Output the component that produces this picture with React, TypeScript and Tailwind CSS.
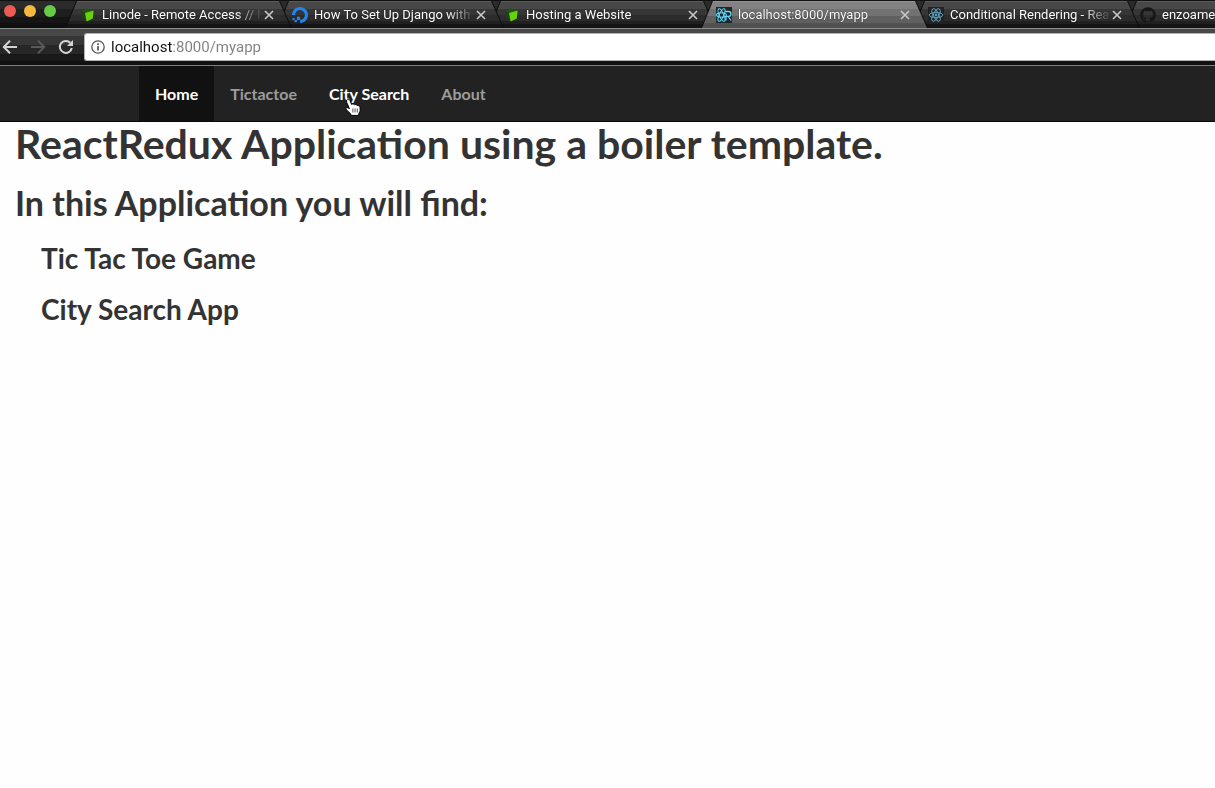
import React from "react";
import { FaGithub } from "react-icons/fa";
import { SiDigitalocean } from "react-icons/si";

function LinodeIcon() {
  return (
    <svg viewBox="0 0 16 16" className="h-4 w-4">
      <path d="M0.5 3.5 L7 1.5 L13 3 L6 6.5 Z" fill="#24501a" />
      <path d="M0.5 3.5 L6 6.5 L6.6 14.5 L2 10.5 Z" fill="#233d1d" />
      <path d="M5 6 L13.6 3.4 L12.8 11.5 L6.6 14.6 Z" fill="#66d30a" />
    </svg>
  );
}

function ReduxReactIcon() {
  return (
    <svg viewBox="0 0 16 16" className="h-4 w-4 bg-[#20262a]" fill="none" stroke="#62d4f3">
      <ellipse cx="5.5" cy="8" rx="5" ry="2.2" strokeWidth="1.1" />
      <ellipse cx="5.5" cy="8" rx="6.8" ry="2.2" strokeWidth="1.1" transform="rotate(66 5.5 8)" />
      <ellipse cx="5.5" cy="8" rx="6.8" ry="2.2" strokeWidth="1.1" transform="rotate(114 5.5 8)" />
      <path d="M9 4.5 H12.6 A2.4 2.4 0 0 1 12.6 9.3 H9.5 M10 9.3 V13.5 M12.2 9.5 L15 13.5" strokeWidth="1.3" />
    </svg>
  );
}

function ReactIcon() {
  return (
    <svg viewBox="0 0 16 16" className="h-4 w-4 bg-[#222222]" fill="none" stroke="#5a9fbd">
      <ellipse cx="8" cy="8" rx="6.8" ry="2.7" />
      <ellipse cx="8" cy="8" rx="6.8" ry="2.7" transform="rotate(60 8 8)" />
      <ellipse cx="8" cy="8" rx="6.8" ry="2.7" transform="rotate(120 8 8)" />
      <circle cx="8" cy="8" r="1.4" fill="#5a9fbd" stroke="none" />
    </svg>
  );
}

interface Tab {
  title: string;
  icon: React.ReactNode;
  active?: boolean;
}

const tabs: Tab[] = [
  { title: "Linode - Remote Access // l", icon: <LinodeIcon /> },
  {
    title: "How To Set Up Django with",
    icon: <SiDigitalocean className="h-4 w-4 text-[#2284ee]" />,
  },
  { title: "Hosting a Website", icon: <LinodeIcon /> },
  { title: "localhost:8000/myapp", icon: <ReduxReactIcon />, active: true },
  { title: "Conditional Rendering - Rea", icon: <ReactIcon /> },
  { title: "enzoames", icon: <FaGithub className="h-4 w-4 text-[#171717]" /> },
];

function BrowserTab({ tab, depth }: { tab: Tab; depth: number }) {
  return (
    <div
      className="relative h-full w-[228px] shrink-0 -mr-4 bg-[#0c0c0c] [clip-path:polygon(11px_0,calc(100%-13px)_0,calc(100%-1px)_100%,0_100%)]"
      style={{ zIndex: tab.active ? 20 : depth }}
    >
      <div
        className={
          "flex h-full items-center pl-[15px] pr-[18px] [clip-path:polygon(12px_0,calc(100%-14px)_0,calc(100%-2px)_100%,1px_100%)] " +
          (tab.active
            ? "bg-[linear-gradient(#929292_0_1px,#828282_1px_8px,#727272_8px_15px,#606060_15px_22px,#525252_22px)]"
            : "bg-[linear-gradient(#5a5a5a_0_1px,#484848_1px_8px,#363636_8px_14px,#2c2c2c_14px_20px,#202020_20px_23px,#141414_23px)]")
        }
      >
        <a
          href="#tab"
          className="flex min-w-0 flex-1 items-center gap-[6px] text-[13px] leading-4 text-white [text-shadow:0_0_1px_#000]"
        >
          <span className="shrink-0">{tab.icon}</span>
          <span className="min-w-0 flex-1 overflow-hidden whitespace-nowrap [mask-image:linear-gradient(to_right,#000_calc(100%-28px),transparent)]">
            {tab.title}
          </span>
        </a>
        <button type="button" aria-label="Close tab" className="flex h-3 w-3 items-center justify-center">
          <svg viewBox="0 0 10 10" className="h-[10px] w-[10px]" stroke="#c9c9c9" strokeWidth="1.6">
            <path d="M1 1 L9 9 M9 1 L1 9" />
          </svg>
        </button>
      </div>
    </div>
  );
}

function TabStrip() {
  return (
    <div className="flex h-7 overflow-hidden border-t border-[#111] bg-[linear-gradient(#2b2b2b_0_8px,#1e1e1e_8px_16px,#151515_16px_22px,#0f0f0f_22px)]">
      <div className="flex w-[65px] shrink-0 gap-2 pl-1 pt-1">
        <button type="button" aria-label="Close" className="h-3 w-3 rounded-full bg-[#ee5b54]" />
        <button type="button" aria-label="Minimize" className="h-3 w-3 rounded-full bg-[#f6b93b]" />
        <button type="button" aria-label="Zoom" className="h-3 w-3 rounded-full bg-[#67cb45]" />
      </div>
      {tabs.map((tab, i) => (
        <BrowserTab key={tab.title} tab={tab} depth={10 - i} />
      ))}
    </div>
  );
}

function Toolbar() {
  return (
    <div className="flex h-[38px] items-start border-t border-b border-t-[#8d8f8e] border-b-[#7d807f] bg-[linear-gradient(#484848_0_7px,#363636_7px_16px,#272727_16px_25px,#191919_25px_32px,#101211_32px)] pt-1">
      <div className="flex h-7 w-[84px] shrink-0 items-center gap-3 pl-[2px]">
        <button type="button" aria-label="Back">
          <svg viewBox="0 0 16 16" className="h-4 w-4" fill="none" stroke="#d5d5d5" strokeWidth="2">
            <path d="M15 8 H2.5 M8 1.8 L1.8 8 L8 14.2" />
          </svg>
        </button>
        <button type="button" aria-label="Forward">
          <svg viewBox="0 0 16 16" className="h-4 w-4" fill="none" stroke="#595959" strokeWidth="2">
            <path d="M1 8 H13.5 M8 1.8 L14.2 8 L8 14.2" />
          </svg>
        </button>
        <button type="button" aria-label="Reload">
          <svg viewBox="0 0 16 16" className="h-4 w-4" fill="none" stroke="#d5d5d5" strokeWidth="2">
            <path d="M13.8 9 A6 6 0 1 1 12.3 3.8" />
            <path d="M15 1 V7 H9 Z" fill="#d5d5d5" stroke="none" />
          </svg>
        </button>
      </div>
      <div className="flex h-7 flex-1 items-center gap-[6px] rounded-l-[3px] border border-r-0 border-[#b3b3b3] bg-white pl-[6px]">
        <svg viewBox="0 0 14 14" className="h-[14px] w-[14px]" fill="none" stroke="#555">
          <circle cx="7" cy="7" r="6.2" strokeWidth="1.3" />
          <path d="M7 6 V10.5 M7 3.3 V4.9" strokeWidth="1.7" />
        </svg>
        <input
          type="text"
          aria-label="Address"
          defaultValue="localhost:8000/myapp"
          className="min-w-0 flex-1 bg-[linear-gradient(to_right,#111_61px,#808080_61px)] bg-clip-text text-[15px] leading-5 text-transparent caret-black outline-none"
        />
      </div>
    </div>
  );
}

const links = [
  { label: "Home", className: "bg-[#111] text-white" },
  { label: "Tictactoe", className: "text-[#9d9d9d]" },
  { label: "City Search", className: "text-white" },
  { label: "About", className: "text-[#9d9d9d]" },
];

function HandCursor() {
  return (
    <svg viewBox="0 0 16 20" className="pointer-events-none absolute left-8 top-8 h-5 w-4">
      <path
        d="M1.6 2.2 C2.4 0.8 4.4 1 5 2.6 L6.6 6.4 C7.6 5.6 9 5.8 9.6 6.8 C10.6 6.2 11.8 6.6 12.2 7.6 C13.4 7.2 14.8 7.8 15 9.3 L15.2 13 L13.8 15.6 V17.4 H5.8 V16 L1.4 11.8 C0.2 10.4 1.4 9 3 9.8 L4.4 10.6 L1.6 4.2 Z"
        fill="#fff"
        stroke="#000"
        strokeWidth="1"
      />
      <path d="M7.9 10.5 V14.5 M10.1 10.5 V14.5 M12.3 10.5 V14.5" stroke="#222" strokeWidth="0.8" />
    </svg>
  );
}

function Navbar() {
  return (
    <nav className="flex h-14 border-b border-[#080808] bg-[#222] pl-[139px] font-['Lato',sans-serif] text-[16px] font-bold leading-5">
      {links.map((link) => (
        <div key={link.label} className="relative">
          <a href="#page" className={"flex h-full items-center px-4 " + link.className}>
            {link.label}
          </a>
          {link.label === "City Search" && <HandCursor />}
        </div>
      ))}
    </nav>
  );
}

export default function App() {
  return (
    <div className="min-h-screen bg-[#fefefe] font-['Roboto',sans-serif]">
      <TabStrip />
      <Toolbar />
      <Navbar />
      <main className="px-[15px] font-['Lato',sans-serif] font-bold text-[#333]">
        <h1 className="text-[41px] leading-[44px]">ReactRedux Application using a boiler template.</h1>
        <h2 className="mt-4 text-[34px] leading-[42px]">In this Application you will find:</h2>
        <div className="flex flex-col gap-[19px] pl-[26px] pt-[18px]">
          <h3 className="text-[28px] leading-8">Tic Tac Toe Game</h3>
          <h3 className="text-[28px] leading-8">City Search App</h3>
        </div>
      </main>
    </div>
  );
}
